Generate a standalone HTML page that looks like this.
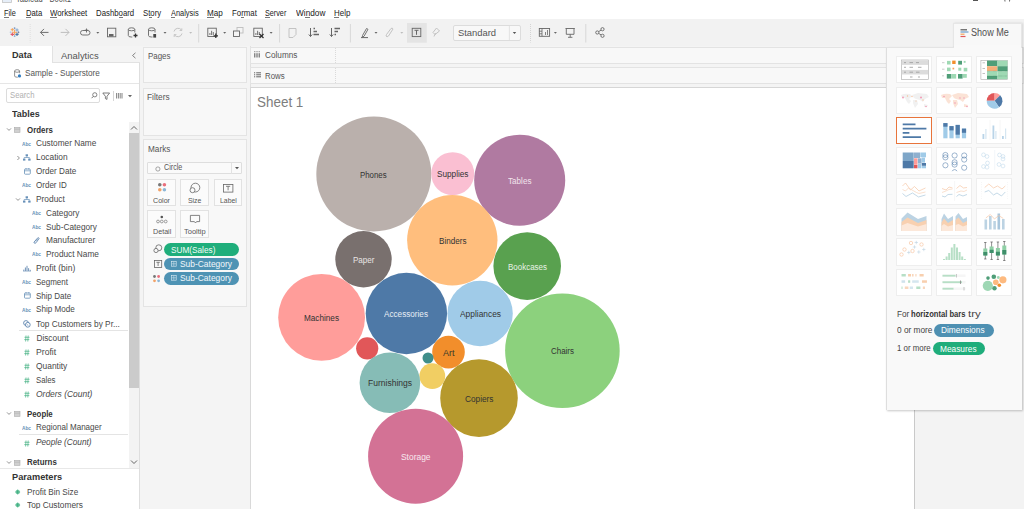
<!DOCTYPE html>
<html><head><meta charset="utf-8"><style>
*{margin:0;padding:0;box-sizing:border-box}
html,body{width:1024px;height:509px;overflow:hidden;background:#fff;font-family:"Liberation Sans",sans-serif;color:#333;position:relative}
.a{position:absolute}
.t{position:absolute;white-space:nowrap;line-height:1}
svg{overflow:visible}
</style></head><body>
<div class="a" style="left:0px;top:0px;width:1024px;height:19px;background:#fff"></div>
<svg class="a" style="left:1.6px;top:0px;" width="10" height="3" viewBox="0 0 10 3"><rect x="0.5" y="-4" width="9" height="6.5" fill="#e6eef8" stroke="#c4c4c4" stroke-width="0.8"/></svg>
<div class="t" style="left:15.6px;top:-6.26px;font-size:10px;color:#555;transform:scaleX(0.761);transform-origin:0 0;">Tableau - Book1</div>
<div class="a" style="left:973px;top:0px;width:5px;height:1.3px;background:#555"></div>
<svg class="a" style="left:1004px;top:0px;" width="7" height="2" viewBox="0 0 7 2"><path d="M0.5 -3 L1 1.5 M6 -3 L5.5 1.5" stroke="#666" stroke-width="1"/></svg>
<div class="t" style="left:4.4px;top:8.82px;font-size:8.6px;color:#222;transform:scaleX(0.851);transform-origin:0 0;">File</div>
<div class="a" style="left:4.4px;top:16.6px;width:4.5px;height:0.7px;background:#777"></div>
<div class="t" style="left:25.5px;top:8.82px;font-size:8.6px;color:#222;transform:scaleX(0.897);transform-origin:0 0;">Data</div>
<div class="a" style="left:25.5px;top:16.6px;width:5.6px;height:0.7px;background:#777"></div>
<div class="t" style="left:50.1px;top:8.82px;font-size:8.6px;color:#222;transform:scaleX(0.911);transform-origin:0 0;">Worksheet</div>
<div class="a" style="left:50.1px;top:16.6px;width:7.4px;height:0.7px;background:#777"></div>
<div class="t" style="left:96.3px;top:8.82px;font-size:8.6px;color:#222;transform:scaleX(0.908);transform-origin:0 0;">Dashboard</div>
<div class="a" style="left:118.9px;top:16.6px;width:4.3px;height:0.7px;background:#777"></div>
<div class="t" style="left:143.3px;top:8.82px;font-size:8.6px;color:#222;transform:scaleX(0.902);transform-origin:0 0;">Story</div>
<div class="a" style="left:148.5px;top:16.6px;width:3px;height:0.7px;background:#777"></div>
<div class="t" style="left:170.6px;top:8.82px;font-size:8.6px;color:#222;transform:scaleX(0.862);transform-origin:0 0;">Analysis</div>
<div class="a" style="left:170.6px;top:16.6px;width:4.9px;height:0.7px;background:#777"></div>
<div class="t" style="left:207.1px;top:8.82px;font-size:8.6px;color:#222;transform:scaleX(0.944);transform-origin:0 0;">Map</div>
<div class="a" style="left:207.1px;top:16.6px;width:6.8px;height:0.7px;background:#777"></div>
<div class="t" style="left:231.8px;top:8.82px;font-size:8.6px;color:#222;transform:scaleX(0.914);transform-origin:0 0;">Format</div>
<div class="a" style="left:241.0px;top:16.6px;width:3px;height:0.7px;background:#777"></div>
<div class="t" style="left:265.2px;top:8.82px;font-size:8.6px;color:#222;transform:scaleX(0.841);transform-origin:0 0;">Server</div>
<div class="a" style="left:265.2px;top:16.6px;width:4.8px;height:0.7px;background:#777"></div>
<div class="t" style="left:295.6px;top:8.82px;font-size:8.6px;color:#222;transform:scaleX(0.961);transform-origin:0 0;">Window</div>
<div class="a" style="left:305.2px;top:16.6px;width:4.6px;height:0.7px;background:#777"></div>
<div class="t" style="left:333.7px;top:8.82px;font-size:8.6px;color:#222;transform:scaleX(0.922);transform-origin:0 0;">Help</div>
<div class="a" style="left:333.7px;top:16.6px;width:5.7px;height:0.7px;background:#777"></div>
<div class="a" style="left:0px;top:19px;width:1024px;height:27px;background:#f2f2f2"></div>
<svg class="a" style="left:0px;top:19px;" width="620" height="27" viewBox="0 0 620 27"><path d="M12.1 13.3H17.1M14.6 10.8V15.8" stroke="#f5a35a" stroke-width="1.0"/><path d="M10.700000000000001 10.7H13.9M12.3 9.1V12.299999999999999" stroke="#f5a35a" stroke-width="1.0"/><path d="M15.4 11H18.6M17 9.4V12.6" stroke="#7fa7d0" stroke-width="1.0"/><path d="M10.600000000000001 15.4H14.0M12.3 13.700000000000001V17.1" stroke="#e05a6d" stroke-width="1.1"/><path d="M15.4 15.4H18.6M17 13.8V17.0" stroke="#4e79a7" stroke-width="1.1"/><path d="M13.7 9.2H15.5M14.6 8.299999999999999V10.1" stroke="#6d8fc0" stroke-width="0.8"/><path d="M13.7 17.1H15.5M14.6 16.200000000000003V18.0" stroke="#7fa7d0" stroke-width="0.8"/><path d="M9.7 13.3H11.5M10.6 12.4V14.200000000000001" stroke="#a9c4e0" stroke-width="0.8"/><path d="M17.6 13.3H19.4M18.5 12.4V14.200000000000001" stroke="#6f7fa0" stroke-width="0.8"/><path d="M30.2 5V23.5" stroke="#dcdcdc" stroke-width="0.8" stroke-dasharray="1 1"/><path d="M40.5 13.4H48.5M44 9.9L40.5 13.4L44 16.9" stroke="#666666" stroke-width="0.95" fill="none"/><path d="M60.7 13.4H69M65.5 9.9L69 13.4L65.5 16.9" stroke="#bdbdbd" stroke-width="1" fill="none"/><rect x="80.5" y="11.5" width="9.5" height="4.5" rx="2.2" stroke="#666666" stroke-width="0.9" fill="none"/><path d="M86.5 9.5V13.5M84.8 11.2H88.2" stroke="#666666" stroke-width="0.9"/><path d="M96.3 13.1h3l-1.5 1.6z" fill="#666666"/><rect x="107.5" y="9.2" width="8.3" height="8.6" stroke="#666666" stroke-width="0.9" fill="none"/><rect x="109" y="15" width="4.5" height="2.5" fill="#666666"/><path d="M128.3 10.5V16.5Q128.3 18 131.3 18H132.3M134.8 10.5V13.5" stroke="#666666" stroke-width="0.9" fill="none"/><ellipse cx="131.55" cy="10.3" rx="3.25" ry="1.5" stroke="#666666" stroke-width="0.9" fill="none"/><path d="M133.5 16.5H137.5M135.5 14.5V18.5" stroke="#333" stroke-width="1.3"/><path d="M148.5 10.5V16.5Q148.5 18 151.5 18H152.5M155.0 10.5V13.5" stroke="#666666" stroke-width="0.9" fill="none"/><ellipse cx="151.75" cy="10.3" rx="3.25" ry="1.5" stroke="#666666" stroke-width="0.9" fill="none"/><rect x="153.3" y="15" width="2.8" height="3.6" fill="#444"/><path d="M163.5 13.1h3l-1.5 1.6z" fill="#666666"/><path d="M174 12.5A4.2 4.2 0 0 1 181.5 11M182 14.5A4.2 4.2 0 0 1 174.5 16" stroke="#bdbdbd" stroke-width="0.9" fill="none"/><path d="M181.8 9.3V11.5H179.6M174.2 18V15.6H176.4" stroke="#bdbdbd" stroke-width="0.8" fill="none"/><path d="M189.2 13.1h3l-1.5 1.6z" fill="#bdbdbd"/><path d="M198.7 5V23.5" stroke="#d8d8d8" stroke-width="1"/><rect x="207.8" y="9.2" width="8.5" height="8.3" stroke="#666666" stroke-width="0.9" fill="none"/><path d="M209.9 16V14M211.60000000000002 16V11.8M213.3 16V13" stroke="#666666" stroke-width="0.9"/><path d="M213.5 16.8H218M215.8 14.5V19" stroke="#333" stroke-width="1.3"/><path d="M223.2 13.1h3l-1.5 1.6z" fill="#666666"/><rect x="237" y="8.5" width="6" height="5.5" stroke="#bdbdbd" stroke-width="0.9" fill="#f4f4f4"/><rect x="233.5" y="12" width="6" height="5.5" stroke="#666666" stroke-width="0.9" fill="#f4f4f4"/><rect x="253.8" y="9.2" width="8.5" height="8.3" stroke="#666666" stroke-width="0.9" fill="none"/><path d="M255.9 16V14M257.6 16V11.8M259.3 16V13" stroke="#666666" stroke-width="0.9"/><path d="M259.5 15L263.5 19M263.5 15L259.5 19" stroke="#333" stroke-width="1.3"/><path d="M269.6 13.1h3l-1.5 1.6z" fill="#666666"/><path d="M279.6 5V23.5" stroke="#d8d8d8" stroke-width="1"/><path d="M289 9.5H296V15.5L293 18.5H289Z" stroke="#bdbdbd" stroke-width="0.9" fill="none"/><path d="M310.5 9V17.5M308.8 15.5L310.5 17.5L312.2 15.5" stroke="#666666" stroke-width="1" fill="none"/><path d="M313.5 9.5H315M313.5 12.5H317M313.5 15.5H319" stroke="#666666" stroke-width="1.6"/><path d="M331.5 9V17.5M329.8 15.5L331.5 17.5L333.2 15.5" stroke="#666666" stroke-width="1" fill="none"/><path d="M334.5 9.5H340M334.5 12.5H338M334.5 15.5H336" stroke="#666666" stroke-width="1.6"/><path d="M350.4 5V23.5" stroke="#d8d8d8" stroke-width="1"/><path d="M362.5 16.5L366.5 9.5L368 10.3L364 17.3L362.3 18Z" stroke="#666666" stroke-width="0.9" fill="none"/><path d="M361 18.6H368" stroke="#666666" stroke-width="1"/><path d="M374.5 13.1h3l-1.5 1.6z" fill="#666666"/><path d="M386.5 15.5L391 9.5Q392.5 8.5 393 10L388.5 17Q387 18.5 386 17Z" stroke="#bdbdbd" stroke-width="0.9" fill="none"/><path d="M400.3 13.1h3l-1.5 1.6z" fill="#bdbdbd"/><rect x="407" y="4" width="19.8" height="19.7" fill="#e4e4e4"/><rect x="412.2" y="9.3" width="8.6" height="8.3" stroke="#666666" stroke-width="0.9" fill="none"/><path d="M414.5 11.3H418.5M416.5 11.3V15.8" stroke="#666666" stroke-width="1"/><path d="M434 17.5L435.5 14M433 13.5L436.5 9L439.5 12L435 15.5Z" stroke="#bdbdbd" stroke-width="0.9" fill="none"/><rect x="453.5" y="6.5" width="67" height="15" rx="1.5" fill="#f8f8f8" stroke="#dcdcdc" stroke-width="1"/><path d="M509.4 7V21" stroke="#e2e2e2"/><path d="M512.8 13h3.4l-1.7 1.9z" fill="#555"/><path d="M530.5 5V23.5" stroke="#d4d4d4" stroke-width="1" stroke-dasharray="1 1"/><rect x="539.3" y="9.5" width="10.3" height="7.8" stroke="#666666" stroke-width="0.9" fill="none"/><path d="M542 9.5V17.3M539.3 12.2H542M539.3 14.8H542M545.5 16V13M547.5 16V11" stroke="#666666" stroke-width="0.8"/><path d="M553.9 13.1h3l-1.5 1.6z" fill="#666666"/><path d="M565.5 9.5H574.8M566.3 9.5V15.3H574V9.5M570.2 15.3V18.2M568 18.3H572.4" stroke="#666666" stroke-width="0.9" fill="none"/><path d="M585.8 5V23.5" stroke="#d8d8d8" stroke-width="1"/><circle cx="597.3" cy="13.5" r="1.6" stroke="#666666" stroke-width="0.9" fill="none"/><circle cx="602.5" cy="10.2" r="1.6" stroke="#666666" stroke-width="0.9" fill="none"/><circle cx="602.5" cy="16.8" r="1.6" stroke="#666666" stroke-width="0.9" fill="none"/><path d="M598.7 12.6L601.1 11.1M598.7 14.4L601.1 15.9" stroke="#666666" stroke-width="0.9"/></svg>
<div class="t" style="left:458.0px;top:28.46px;font-size:9.5px;color:#555;transform:scaleX(0.988);transform-origin:0 0;">Standard</div>
<div class="a" style="left:0px;top:46px;width:140px;height:463px;background:#fff"></div>
<div class="a" style="left:139px;top:46px;width:1px;height:463px;background:#dedede"></div>
<div class="a" style="left:51.6px;top:46px;width:88px;height:17.4px;background:#f4f4f4;border-left:1px solid #e2e2e2;border-bottom:1px solid #e2e2e2"></div>
<div class="t" style="left:12.1px;top:50.37px;font-size:9.6px;color:#333;font-weight:bold;transform:scaleX(0.952);transform-origin:0 0;">Data</div>
<div class="t" style="left:60.5px;top:50.56px;font-size:9.5px;color:#555;transform:scaleX(0.994);transform-origin:0 0;">Analytics</div>
<svg class="a" style="left:131px;top:52px;" width="6" height="6" viewBox="0 0 6 6"><path d="M4.5 0.8L1.5 3.5L4.5 6.2" stroke="#777" stroke-width="0.9" fill="none"/></svg>
<svg class="a" style="left:14px;top:69px;" width="8" height="9" viewBox="0 0 8 9"><path d="M0.6 2V7Q0.6 8.2 3 8.2H3.8M5.6 2V4.2" stroke="#777" stroke-width="0.8" fill="none"/><ellipse cx="3.1" cy="2" rx="2.5" ry="1.3" stroke="#777" stroke-width="0.8" fill="none"/><circle cx="5.5" cy="6.9" r="1.6" fill="#2f7bbf"/></svg>
<div class="t" style="left:24.8px;top:69.12px;font-size:8.6px;color:#555;transform:scaleX(0.950);transform-origin:0 0;">Sample - Superstore</div>
<div class="a" style="left:0px;top:83px;width:139px;height:1px;background:#e6e6e6"></div>
<div class="a" style="left:5.5px;top:88.4px;width:94.5px;height:15px;background:#fff;border:1px solid #dcdcdc;border-radius:2px"></div>
<div class="t" style="left:9.9px;top:91.39px;font-size:8.4px;color:#b0b0b0;transform:scaleX(0.920);transform-origin:0 0;">Search</div>
<svg class="a" style="left:91px;top:92px;" width="7" height="7" viewBox="0 0 7 7"><circle cx="3.8" cy="2.8" r="2.1" stroke="#666" stroke-width="0.8" fill="none"/><path d="M2.3 4.4L0.6 6.2" stroke="#666" stroke-width="0.9"/></svg>
<svg class="a" style="left:102px;top:92px;" width="9" height="8" viewBox="0 0 9 8"><path d="M0.8 1H7.6L5 4.3V7.4L3.4 6.6V4.3Z" stroke="#666" stroke-width="0.85" fill="none"/></svg>
<div class="a" style="left:112.5px;top:91px;width:0.8px;height:10px;background:#d6d6d6"></div>
<svg class="a" style="left:116px;top:93px;" width="7" height="6" viewBox="0 0 7 6"><path d="M0.6 0V5.5M2.4 0V5.5M4.2 0V5.5M6 0V5.5" stroke="#777" stroke-width="0.9"/></svg>
<svg class="a" style="left:127.5px;top:94.5px;" width="5" height="3" viewBox="0 0 5 3"><path d="M0 0h4l-2 2.3z" fill="#666"/></svg>
<div class="t" style="left:12.4px;top:109.10px;font-size:9.8px;color:#333;font-weight:bold;transform:scaleX(0.917);transform-origin:0 0;">Tables</div>
<div class="a" style="left:128.6px;top:122.2px;width:10.4px;height:346px;background:#f3f3f3"></div>
<div class="a" style="left:128.6px;top:133.2px;width:10.4px;height:254.5px;background:#cbcbcb"></div>
<svg class="a" style="left:130px;top:125px;" width="8" height="6" viewBox="0 0 8 6"><path d="M1 4.5L4 1.5L7 4.5" stroke="#555" stroke-width="0.9" fill="none"/></svg>
<svg class="a" style="left:130px;top:459px;" width="8" height="6" viewBox="0 0 8 6"><path d="M1 1.5L4 4.5L7 1.5" stroke="#555" stroke-width="0.9" fill="none"/></svg>
<svg class="a" style="left:5.8px;top:126.5px;" width="6" height="5" viewBox="0 0 6 5"><path d="M1 1.4L3 3.4L5 1.4" stroke="#777" stroke-width="0.8" fill="none"/></svg>
<svg class="a" style="left:14px;top:126.5px;" width="7" height="6" viewBox="0 0 7 6"><rect x="0.5" y="0.5" width="5.5" height="4.8" fill="#d0d0d0" stroke="#aaa" stroke-width="0.6"/><path d="M0.5 2.2H6" stroke="#aaa" stroke-width="0.5"/></svg>
<div class="t" style="left:26.8px;top:124.64px;font-size:9.4px;color:#333;font-weight:bold;transform:scaleX(0.840);transform-origin:0 0;">Orders</div>
<div class="t" style="left:36.4px;top:139.27px;font-size:8.3px;color:#484848;transform:scaleX(0.998);transform-origin:0 0;">Customer Name</div>
<div class="t" style="left:22.0px;top:140.62px;font-size:6px;color:#6790b8;font-weight:bold;transform:scaleX(0.794);transform-origin:0 0;">Abc</div>
<div class="t" style="left:36.4px;top:152.97px;font-size:8.3px;color:#484848;transform:scaleX(1.010);transform-origin:0 0;">Location</div>
<svg class="a" style="left:23px;top:153.8px;" width="8" height="7" viewBox="0 0 8 7"><rect x="2.6" y="0.3" width="2.4" height="2" fill="#6790b8"/><path d="M3.8 2.3V3.5M1.2 3.5H6.4M1.2 3.5V4.5M6.4 3.5V4.5" stroke="#6790b8" stroke-width="0.7" fill="none"/><rect x="0" y="4.6" width="2.4" height="2" fill="#6790b8"/><rect x="5.2" y="4.6" width="2.4" height="2" fill="#6790b8"/></svg>
<div class="t" style="left:36.4px;top:166.77px;font-size:8.3px;color:#484848;transform:scaleX(0.979);transform-origin:0 0;">Order Date</div>
<svg class="a" style="left:23.5px;top:167.5px;" width="7" height="7" viewBox="0 0 7 7"><rect x="0.5" y="1" width="5.8" height="5.2" rx="0.8" stroke="#6790b8" stroke-width="0.8" fill="none"/><path d="M0.5 2.8H6.3M2 0V1.5M4.8 0V1.5" stroke="#6790b8" stroke-width="0.7"/></svg>
<div class="t" style="left:36.4px;top:180.97px;font-size:8.3px;color:#484848;transform:scaleX(0.968);transform-origin:0 0;">Order ID</div>
<div class="t" style="left:22.0px;top:182.32px;font-size:6px;color:#6790b8;font-weight:bold;transform:scaleX(0.794);transform-origin:0 0;">Abc</div>
<div class="t" style="left:36.4px;top:194.77px;font-size:8.3px;color:#484848;transform:scaleX(1.007);transform-origin:0 0;">Product</div>
<svg class="a" style="left:23px;top:195.60000000000002px;" width="8" height="7" viewBox="0 0 8 7"><rect x="2.6" y="0.3" width="2.4" height="2" fill="#6790b8"/><path d="M3.8 2.3V3.5M1.2 3.5H6.4M1.2 3.5V4.5M6.4 3.5V4.5" stroke="#6790b8" stroke-width="0.7" fill="none"/><rect x="0" y="4.6" width="2.4" height="2" fill="#6790b8"/><rect x="5.2" y="4.6" width="2.4" height="2" fill="#6790b8"/></svg>
<div class="t" style="left:46.1px;top:208.77px;font-size:8.3px;color:#484848;transform:scaleX(0.992);transform-origin:0 0;">Category</div>
<div class="t" style="left:32.0px;top:210.12px;font-size:6px;color:#6790b8;font-weight:bold;transform:scaleX(0.794);transform-origin:0 0;">Abc</div>
<div class="t" style="left:46.1px;top:222.77px;font-size:8.3px;color:#484848;transform:scaleX(0.996);transform-origin:0 0;">Sub-Category</div>
<div class="t" style="left:32.0px;top:224.12px;font-size:6px;color:#6790b8;font-weight:bold;transform:scaleX(0.794);transform-origin:0 0;">Abc</div>
<div class="t" style="left:46.1px;top:236.37px;font-size:8.3px;color:#484848;transform:scaleX(1.006);transform-origin:0 0;">Manufacturer</div>
<svg class="a" style="left:33px;top:236.9px;" width="7" height="7" viewBox="0 0 7 7"><path d="M1 5.2L4.4 1.2Q5.6 0.2 6.2 1.3L3.2 5.6Q2 6.8 1.2 6Z" stroke="#4e79a7" stroke-width="0.8" fill="none"/><path d="M2.5 4.2L4.8 1.8" stroke="#4e79a7" stroke-width="0.6"/></svg>
<div class="t" style="left:46.1px;top:250.07px;font-size:8.3px;color:#484848;transform:scaleX(0.999);transform-origin:0 0;">Product Name</div>
<div class="t" style="left:32.0px;top:251.42px;font-size:6px;color:#6790b8;font-weight:bold;transform:scaleX(0.794);transform-origin:0 0;">Abc</div>
<div class="t" style="left:36.4px;top:264.07px;font-size:8.3px;color:#484848;transform:scaleX(1.027);transform-origin:0 0;">Profit (bin)</div>
<svg class="a" style="left:22.5px;top:265.1px;" width="9" height="7" viewBox="0 0 9 7"><path d="M0.8 6V4.6M2.4 6V2.5M4 6V0.8M5.6 6V3.2M7.2 6V4.8" stroke="#4e79a7" stroke-width="0.8"/><path d="M0 6.3H8" stroke="#4e79a7" stroke-width="0.4"/></svg>
<div class="t" style="left:36.4px;top:277.87px;font-size:8.3px;color:#484848;transform:scaleX(0.963);transform-origin:0 0;">Segment</div>
<div class="t" style="left:22.0px;top:279.22px;font-size:6px;color:#6790b8;font-weight:bold;transform:scaleX(0.794);transform-origin:0 0;">Abc</div>
<div class="t" style="left:36.4px;top:291.57px;font-size:8.3px;color:#484848;transform:scaleX(0.966);transform-origin:0 0;">Ship Date</div>
<svg class="a" style="left:23.5px;top:292.3px;" width="7" height="7" viewBox="0 0 7 7"><rect x="0.5" y="1" width="5.8" height="5.2" rx="0.8" stroke="#6790b8" stroke-width="0.8" fill="none"/><path d="M0.5 2.8H6.3M2 0V1.5M4.8 0V1.5" stroke="#6790b8" stroke-width="0.7"/></svg>
<div class="t" style="left:36.4px;top:305.37px;font-size:8.3px;color:#484848;transform:scaleX(0.978);transform-origin:0 0;">Ship Mode</div>
<div class="t" style="left:22.0px;top:306.72px;font-size:6px;color:#6790b8;font-weight:bold;transform:scaleX(0.794);transform-origin:0 0;">Abc</div>
<div class="t" style="left:36.4px;top:319.67px;font-size:8.3px;color:#484848;transform:scaleX(0.999);transform-origin:0 0;">Top Customers by Pr...</div>
<svg class="a" style="left:22.5px;top:319.9px;" width="8" height="8" viewBox="0 0 8 8"><circle cx="3" cy="3" r="2.4" stroke="#4e79a7" stroke-width="0.8" fill="none"/><circle cx="4.8" cy="4.8" r="2.4" stroke="#4e79a7" stroke-width="0.8" fill="#fff"/><path d="M3.6 4.2L5.4 5.6" stroke="#4e79a7" stroke-width="0.6"/></svg>
<div class="t" style="left:36.4px;top:334.37px;font-size:8.3px;color:#484848;transform:scaleX(1.000);transform-origin:0 0;">Discount</div>
<svg class="a" style="left:24px;top:335.4px;" width="6" height="7" viewBox="0 0 6 7"><path d="M2 0.5L1.6 6.5M4.2 0.5L3.8 6.5M0.5 2.3H5.5M0.3 4.6H5.3" stroke="#4fb58a" stroke-width="0.75"/></svg>
<div class="t" style="left:36.4px;top:348.17px;font-size:8.3px;color:#484848;transform:scaleX(1.043);transform-origin:0 0;">Profit</div>
<svg class="a" style="left:24px;top:349.2px;" width="6" height="7" viewBox="0 0 6 7"><path d="M2 0.5L1.6 6.5M4.2 0.5L3.8 6.5M0.5 2.3H5.5M0.3 4.6H5.3" stroke="#4fb58a" stroke-width="0.75"/></svg>
<div class="t" style="left:36.4px;top:361.87px;font-size:8.3px;color:#484848;transform:scaleX(1.013);transform-origin:0 0;">Quantity</div>
<svg class="a" style="left:24px;top:362.9px;" width="6" height="7" viewBox="0 0 6 7"><path d="M2 0.5L1.6 6.5M4.2 0.5L3.8 6.5M0.5 2.3H5.5M0.3 4.6H5.3" stroke="#4fb58a" stroke-width="0.75"/></svg>
<div class="t" style="left:36.4px;top:375.67px;font-size:8.3px;color:#484848;transform:scaleX(0.939);transform-origin:0 0;">Sales</div>
<svg class="a" style="left:24px;top:376.7px;" width="6" height="7" viewBox="0 0 6 7"><path d="M2 0.5L1.6 6.5M4.2 0.5L3.8 6.5M0.5 2.3H5.5M0.3 4.6H5.3" stroke="#4fb58a" stroke-width="0.75"/></svg>
<div class="a" style="left:19.3px;top:330px;width:108.7px;height:0.8px;background:#e4e4e4"></div>
<div class="t" style="left:36.4px;top:389.67px;font-size:8.3px;color:#484848;font-style:italic;transform:scaleX(1.019);transform-origin:0 0;">Orders (Count)</div>
<svg class="a" style="left:24px;top:390.7px;" width="6" height="7" viewBox="0 0 6 7"><path d="M2 0.5L1.6 6.5M4.2 0.5L3.8 6.5M0.5 2.3H5.5M0.3 4.6H5.3" stroke="#4fb58a" stroke-width="0.75"/></svg>
<svg class="a" style="left:5.8px;top:410.5px;" width="6" height="5" viewBox="0 0 6 5"><path d="M1 1.4L3 3.4L5 1.4" stroke="#777" stroke-width="0.8" fill="none"/></svg>
<svg class="a" style="left:14px;top:410.5px;" width="7" height="6" viewBox="0 0 7 6"><rect x="0.5" y="0.5" width="5.5" height="4.8" fill="#d0d0d0" stroke="#aaa" stroke-width="0.6"/><path d="M0.5 2.2H6" stroke="#aaa" stroke-width="0.5"/></svg>
<div class="t" style="left:26.8px;top:408.74px;font-size:9.4px;color:#333;font-weight:bold;transform:scaleX(0.837);transform-origin:0 0;">People</div>
<div class="t" style="left:36.4px;top:423.37px;font-size:8.3px;color:#484848;transform:scaleX(0.969);transform-origin:0 0;">Regional Manager</div>
<div class="t" style="left:22.0px;top:424.72px;font-size:6px;color:#6790b8;font-weight:bold;transform:scaleX(0.794);transform-origin:0 0;">Abc</div>
<div class="a" style="left:19.3px;top:433.5px;width:108.7px;height:0.8px;background:#e4e4e4"></div>
<div class="t" style="left:36.4px;top:438.47px;font-size:8.3px;color:#484848;font-style:italic;transform:scaleX(0.996);transform-origin:0 0;">People (Count)</div>
<svg class="a" style="left:24px;top:439.5px;" width="6" height="7" viewBox="0 0 6 7"><path d="M2 0.5L1.6 6.5M4.2 0.5L3.8 6.5M0.5 2.3H5.5M0.3 4.6H5.3" stroke="#4fb58a" stroke-width="0.75"/></svg>
<svg class="a" style="left:5.8px;top:459.5px;" width="6" height="5" viewBox="0 0 6 5"><path d="M1 1.4L3 3.4L5 1.4" stroke="#777" stroke-width="0.8" fill="none"/></svg>
<svg class="a" style="left:14px;top:459.5px;" width="7" height="6" viewBox="0 0 7 6"><rect x="0.5" y="0.5" width="5.5" height="4.8" fill="#d0d0d0" stroke="#aaa" stroke-width="0.6"/><path d="M0.5 2.2H6" stroke="#aaa" stroke-width="0.5"/></svg>
<div class="t" style="left:26.8px;top:457.44px;font-size:9.4px;color:#333;font-weight:bold;transform:scaleX(0.842);transform-origin:0 0;">Returns</div>
<div class="a" style="left:0px;top:468px;width:139px;height:1px;background:#e8e8e8"></div>
<div class="t" style="left:12.0px;top:472.00px;font-size:9.8px;color:#333;font-weight:bold;transform:scaleX(0.940);transform-origin:0 0;">Parameters</div>
<svg class="a" style="left:14.8px;top:488.90000000000003px;" width="6" height="6" viewBox="0 0 6 6"><circle cx="2.7" cy="3" r="2.2" fill="#7fcfa9"/><path d="M0.3 3H5.1M2.7 0.6V5.4" stroke="#2ea37a" stroke-width="0.7"/></svg>
<div class="t" style="left:26.9px;top:488.07px;font-size:8.3px;color:#484848;transform:scaleX(0.982);transform-origin:0 0;">Profit Bin Size</div>
<svg class="a" style="left:14.8px;top:502.2px;" width="6" height="6" viewBox="0 0 6 6"><circle cx="2.7" cy="3" r="2.2" fill="#7fcfa9"/><path d="M0.3 3H5.1M2.7 0.6V5.4" stroke="#2ea37a" stroke-width="0.7"/></svg>
<div class="t" style="left:26.9px;top:501.37px;font-size:8.3px;color:#484848;transform:scaleX(1.003);transform-origin:0 0;">Top Customers</div>
<svg class="a" style="left:15.5px;top:154.5px;" width="5" height="6" viewBox="0 0 5 6"><path d="M1.4 1L3.4 3L1.4 5" stroke="#777" stroke-width="0.8" fill="none"/></svg>
<svg class="a" style="left:14.8px;top:197px;" width="6" height="5" viewBox="0 0 6 5"><path d="M1 1.4L3 3.4L5 1.4" stroke="#777" stroke-width="0.8" fill="none"/></svg>
<div class="a" style="left:140px;top:46px;width:109.5px;height:463px;background:#f4f4f4"></div>
<div class="a" style="left:249.5px;top:46px;width:1px;height:463px;background:#e0e0e0"></div>
<div class="a" style="left:143.3px;top:46.7px;width:103.3px;height:36.8px;background:#f8f8f8;border:1px solid #e4e4e4"></div>
<div class="t" style="left:147.6px;top:52.15px;font-size:8.8px;color:#555;transform:scaleX(0.902);transform-origin:0 0;">Pages</div>
<div class="a" style="left:143.3px;top:87.5px;width:103.3px;height:48.1px;background:#f8f8f8;border:1px solid #e4e4e4"></div>
<div class="t" style="left:147.4px;top:93.25px;font-size:8.8px;color:#555;transform:scaleX(0.943);transform-origin:0 0;">Filters</div>
<div class="a" style="left:143.3px;top:139.3px;width:103.3px;height:167.7px;background:#f8f8f8;border:1px solid #e4e4e4"></div>
<div class="t" style="left:147.5px;top:145.45px;font-size:8.8px;color:#555;transform:scaleX(0.935);transform-origin:0 0;">Marks</div>
<div class="a" style="left:147.4px;top:162.4px;width:94.6px;height:12.1px;background:#fafafa;border:1px solid #dedede;border-radius:1px"></div>
<div class="a" style="left:230.5px;top:163px;width:0.8px;height:11px;background:#e2e2e2"></div>
<svg class="a" style="left:234.5px;top:167px;" width="5" height="3" viewBox="0 0 5 3"><path d="M0 0h4l-2 2.3z" fill="#555"/></svg>
<svg class="a" style="left:154.5px;top:165.6px;" width="6" height="6" viewBox="0 0 6 6"><circle cx="2.9" cy="3" r="2.1" stroke="#888" stroke-width="0.75" fill="none"/></svg>
<div class="t" style="left:163.8px;top:164.36px;font-size:8.2px;color:#555;transform:scaleX(0.873);transform-origin:0 0;">Circle</div>
<div class="a" style="left:147.1px;top:178.9px;width:28.6px;height:27.3px;background:#fbfbfb;border:1px solid #e2e2e2"></div>
<div class="a" style="left:180px;top:178.9px;width:29.4px;height:27.3px;background:#fbfbfb;border:1px solid #e2e2e2"></div>
<div class="a" style="left:213.5px;top:178.9px;width:28.5px;height:27.3px;background:#fbfbfb;border:1px solid #e2e2e2"></div>
<div class="a" style="left:147.1px;top:210.3px;width:28.6px;height:27.3px;background:#fbfbfb;border:1px solid #e2e2e2"></div>
<div class="a" style="left:180px;top:210.3px;width:29.4px;height:27.3px;background:#fbfbfb;border:1px solid #e2e2e2"></div>
<div class="t" style="left:152.9px;top:196.50px;font-size:7.8px;color:#555;transform:scaleX(0.912);transform-origin:0 0;">Color</div>
<div class="t" style="left:187.8px;top:196.50px;font-size:7.8px;color:#555;transform:scaleX(0.883);transform-origin:0 0;">Size</div>
<div class="t" style="left:219.5px;top:196.50px;font-size:7.8px;color:#555;transform:scaleX(0.880);transform-origin:0 0;">Label</div>
<div class="t" style="left:152.9px;top:228.20px;font-size:7.8px;color:#555;transform:scaleX(0.918);transform-origin:0 0;">Detail</div>
<div class="t" style="left:184.0px;top:228.20px;font-size:7.8px;color:#555;transform:scaleX(0.962);transform-origin:0 0;">Tooltip</div>
<svg class="a" style="left:157.5px;top:183.2px;" width="8" height="8" viewBox="0 0 8 8"><circle cx="1.8" cy="1.8" r="1.8" fill="#777"/><circle cx="6.3999999999999995" cy="1.8" r="1.8" fill="#ea6f7c"/><circle cx="1.8" cy="6.8" r="1.8" fill="#f2a268"/><circle cx="6.3999999999999995" cy="6.8" r="1.8" fill="#8cb6d6"/></svg>
<svg class="a" style="left:189px;top:181.5px;" width="12" height="10" viewBox="0 0 12 10"><circle cx="6.4" cy="5.6" r="4.4" stroke="#666" stroke-width="0.8" fill="none"/><circle cx="3.5" cy="8.2" r="2.5" stroke="#666" stroke-width="0.8" fill="#fbfbfb"/></svg>
<svg class="a" style="left:223px;top:183.5px;" width="10" height="9" viewBox="0 0 10 9"><rect x="0.4" y="0.4" width="9.5" height="7.7" stroke="#666" stroke-width="0.8" fill="none"/><path d="M3 2.3H7.2M5.1 2.3V6.3" stroke="#666" stroke-width="0.8"/></svg>
<svg class="a" style="left:155.5px;top:214.5px;" width="12" height="8" viewBox="0 0 12 8"><circle cx="5.8" cy="2" r="1.3" fill="#555"/><circle cx="2" cy="6.5" r="1.4" stroke="#777" stroke-width="0.7" fill="none"/><circle cx="5.8" cy="6.5" r="1.4" stroke="#777" stroke-width="0.7" fill="none"/><circle cx="9.7" cy="6.5" r="1.4" stroke="#777" stroke-width="0.7" fill="none"/></svg>
<svg class="a" style="left:190px;top:215px;" width="11" height="9" viewBox="0 0 11 9"><path d="M0.4 0.4H9.6V6.6H6.6L5.5 8L4.4 6.6H0.4Z" stroke="#666" stroke-width="0.8" fill="none"/></svg>
<div class="a" style="left:163.9px;top:243.1px;width:75.6px;height:12.8px;background:#1fae7b;border-radius:7px"></div>
<div class="t" style="left:171.0px;top:245.99px;font-size:8.4px;color:#f4fbf7;transform:scaleX(0.983);transform-origin:0 0;">SUM(Sales)</div>
<div class="a" style="left:163.9px;top:257.9px;width:75.6px;height:12.4px;background:#4e93b4;border-radius:7px"></div>
<div class="a" style="left:163.9px;top:272.2px;width:75.6px;height:12.6px;background:#4e93b4;border-radius:7px"></div>
<svg class="a" style="left:171px;top:261.1px;" width="6" height="6" viewBox="0 0 6 6"><rect x="0.4" y="0.4" width="4.8" height="4.8" stroke="#e0eef5" stroke-width="0.6" fill="none"/><path d="M2.8 0.6V5M0.6 2.8H5" stroke="#e0eef5" stroke-width="0.5"/></svg>
<div class="t" style="left:180.2px;top:259.99px;font-size:8.4px;color:#f2f8fb;transform:scaleX(1.005);transform-origin:0 0;">Sub-Category</div>
<svg class="a" style="left:171px;top:275.4px;" width="6" height="6" viewBox="0 0 6 6"><rect x="0.4" y="0.4" width="4.8" height="4.8" stroke="#e0eef5" stroke-width="0.6" fill="none"/><path d="M2.8 0.6V5M0.6 2.8H5" stroke="#e0eef5" stroke-width="0.5"/></svg>
<div class="t" style="left:180.2px;top:274.29px;font-size:8.4px;color:#f2f8fb;transform:scaleX(1.005);transform-origin:0 0;">Sub-Category</div>
<svg class="a" style="left:153px;top:244px;" width="10" height="10" viewBox="0 0 10 10"><circle cx="5.8" cy="3.8" r="3" stroke="#666" stroke-width="0.8" fill="none"/><circle cx="3" cy="6.5" r="2.1" stroke="#666" stroke-width="0.8" fill="#f8f8f8"/></svg>
<svg class="a" style="left:153.5px;top:260px;" width="9" height="9" viewBox="0 0 9 9"><rect x="0.5" y="0.5" width="7.2" height="7" stroke="#666" stroke-width="0.8" fill="none"/><path d="M2.4 2.3H5.8M4.1 2.3V6" stroke="#666" stroke-width="0.8"/></svg>
<svg class="a" style="left:153px;top:275px;" width="8" height="9" viewBox="0 0 8 9"><circle cx="1.5" cy="1.5" r="1.4" fill="#777"/><circle cx="5.6" cy="1.5" r="1.4" fill="#ea6f7c"/><circle cx="1.5" cy="5.8" r="1.4" fill="#f2a268"/><circle cx="5.6" cy="5.8" r="1.4" fill="#8cb6d6"/></svg>
<div class="a" style="left:250.5px;top:46px;width:773.5px;height:41px;background:#f4f4f4"></div>
<div class="a" style="left:250px;top:46.8px;width:774px;height:17.2px;background:#f8f8f8;border:1px solid #e3e3e3"></div>
<div class="a" style="left:250px;top:66.9px;width:774px;height:17.1px;background:#f8f8f8;border:1px solid #e3e3e3"></div>
<div class="a" style="left:334.9px;top:47.5px;width:0.8px;height:15.5px;border-left:1px dotted #dadada"></div>
<div class="a" style="left:334.9px;top:67.5px;width:0.8px;height:15.5px;border-left:1px dotted #dadada"></div>
<svg class="a" style="left:254px;top:51px;" width="7" height="7" viewBox="0 0 7 7"><path d="M0.8 2.2V6.5M3 2.2V6.5M5.2 2.2V6.5" stroke="#555" stroke-width="1"/><path d="M0.8 0.3V1.2M3 0.3V1.2M5.2 0.3V1.2" stroke="#555" stroke-width="1"/></svg>
<div class="t" style="left:264.8px;top:51.27px;font-size:8.3px;color:#555;transform:scaleX(0.989);transform-origin:0 0;">Columns</div>
<svg class="a" style="left:254px;top:71.5px;" width="7" height="7" viewBox="0 0 7 7"><path d="M0 0.8H1.2M2.2 0.8H7M0 2.8H1.2M2.2 2.8H7M0 4.8H1.2M2.2 4.8H7" stroke="#555" stroke-width="0.9"/></svg>
<div class="t" style="left:264.8px;top:71.77px;font-size:8.3px;color:#555;transform:scaleX(0.944);transform-origin:0 0;">Rows</div>
<div class="a" style="left:250px;top:86.5px;width:664.5px;height:422.5px;background:#fff;border-top:1.5px solid #d6d6d6;border-left:1px solid #d9d9d9"></div>
<div class="a" style="left:914px;top:86.5px;width:110px;height:422.5px;background:#f3f3f3;border-left:1px solid #c9c9c9"></div>
<div class="t" style="left:256.5px;top:96.03px;font-size:13.9px;color:#7d7d7d;transform:scaleX(0.968);transform-origin:0 0;">Sheet 1</div>
<svg class="a" style="left:0px;top:0px;" width="1024" height="509" viewBox="0 0 1024 509"><circle cx="373.8" cy="174.0" r="57.5" fill="#bab0ac"/><circle cx="452.7" cy="173.7" r="21.5" fill="#fabfd2"/><circle cx="519.7" cy="180.3" r="45.5" fill="#b07aa1"/><circle cx="452.3" cy="240.3" r="45.2" fill="#ffbe7d"/><circle cx="363.5" cy="259.2" r="28.2" fill="#79706e"/><circle cx="527.2" cy="266.1" r="33.8" fill="#59a14f"/><circle cx="321.6" cy="317.4" r="43.4" fill="#ff9d9a"/><circle cx="406.4" cy="313.5" r="40.7" fill="#4e79a7"/><circle cx="480.1" cy="313.5" r="32.7" fill="#a0cbe8"/><circle cx="562.4" cy="350.8" r="57.3" fill="#8cd17d"/><circle cx="367.2" cy="348.3" r="11.1" fill="#e15759"/><circle cx="448.5" cy="352.1" r="16.3" fill="#f28e2b"/><circle cx="428.0" cy="358.0" r="5.5" fill="#3f8e8a"/><circle cx="432.3" cy="376.1" r="12.9" fill="#f1ce63"/><circle cx="389.9" cy="382.8" r="30.3" fill="#86bcb6"/><circle cx="479.0" cy="398.1" r="38.8" fill="#b6992d"/><circle cx="415.6" cy="456.2" r="47.5" fill="#d37295"/></svg>
<div class="t" style="left:360.4px;top:170.56px;font-size:8.3px;color:#333;transform:scaleX(0.948);transform-origin:0 0;">Phones</div>
<div class="t" style="left:436.9px;top:170.26px;font-size:8.3px;color:#333;transform:scaleX(0.989);transform-origin:0 0;">Supplies</div>
<div class="t" style="left:508.0px;top:176.86px;font-size:8.3px;color:#f0e4ec;transform:scaleX(0.979);transform-origin:0 0;">Tables</div>
<div class="t" style="left:438.6px;top:236.86px;font-size:8.3px;color:#333;transform:scaleX(0.977);transform-origin:0 0;">Binders</div>
<div class="t" style="left:352.8px;top:255.76px;font-size:8.3px;color:#e8e4e3;transform:scaleX(0.971);transform-origin:0 0;">Paper</div>
<div class="t" style="left:507.7px;top:262.66px;font-size:8.3px;color:#e8f2e6;transform:scaleX(0.961);transform-origin:0 0;">Bookcases</div>
<div class="t" style="left:304.1px;top:313.96px;font-size:8.3px;color:#333;transform:scaleX(0.985);transform-origin:0 0;">Machines</div>
<div class="t" style="left:384.4px;top:310.06px;font-size:8.3px;color:#e8eef6;transform:scaleX(0.983);transform-origin:0 0;">Accessories</div>
<div class="t" style="left:459.6px;top:310.06px;font-size:8.3px;color:#333;transform:scaleX(1.010);transform-origin:0 0;">Appliances</div>
<div class="t" style="left:550.9px;top:347.36px;font-size:8.3px;color:#333;transform:scaleX(0.959);transform-origin:0 0;">Chairs</div>
<div class="t" style="left:442.8px;top:348.66px;font-size:8.3px;color:#3a3a2a;transform:scaleX(1.084);transform-origin:0 0;">Art</div>
<div class="t" style="left:367.9px;top:379.36px;font-size:8.3px;color:#333;transform:scaleX(1.026);transform-origin:0 0;">Furnishings</div>
<div class="t" style="left:464.8px;top:394.66px;font-size:8.3px;color:#333;transform:scaleX(0.996);transform-origin:0 0;">Copiers</div>
<div class="t" style="left:400.9px;top:452.76px;font-size:8.3px;color:#f8e8ef;transform:scaleX(1.015);transform-origin:0 0;">Storage</div>
<div class="a" style="left:953.4px;top:22.6px;width:68.6px;height:26px;background:#f8f8f8;border:1px solid #e6e6e6;border-bottom:none;box-shadow:1px 0 2px rgba(0,0,0,0.12)"></div>
<div class="a" style="left:886px;top:46.7px;width:136px;height:363.3px;background:#f9f9f9;border-left:1px solid #dedede;border-top:1px solid #e4e4e4;box-shadow:1px 1px 2px rgba(0,0,0,0.22)"></div>
<div class="a" style="left:954.4px;top:45px;width:66.6px;height:3px;background:#f9f9f9"></div>
<svg class="a" style="left:960px;top:28.5px;" width="9" height="9" viewBox="0 0 9 9"><path d="M0.5 0.8H7" stroke="#555" stroke-width="1.2"/><path d="M0.5 3H8.5" stroke="#6a9ccc" stroke-width="1.2"/><path d="M0.5 5.2H4.5" stroke="#f5a35a" stroke-width="1.2"/><path d="M0.5 7.5H5.5" stroke="#e15759" stroke-width="1.2"/></svg>
<div class="t" style="left:971.4px;top:28.14px;font-size:10px;color:#505050;transform:scaleX(0.907);transform-origin:0 0;">Show Me</div>
<div class="a" style="left:895.5px;top:56.1px;width:36.5px;height:27.3px;background:#fff;border:1px solid #eeeeee"></div>
<svg class="a" style="left:895.5px;top:56.1px;" width="36.5" height="27.3" viewBox="0 0 36.5 27.3"><rect x="5.5" y="4" width="26.8" height="19.4" fill="#fff" stroke="#aaa" stroke-width="0.6"/><rect x="5.8" y="4.3" width="26.2" height="4.6" fill="#dcdcdc"/><rect x="5.8" y="13.9" width="26.2" height="4.6" fill="#dcdcdc"/><path d="M8 6.6H10M13.5 6.6H17M20 6.6H23M8 11.3H10M13.5 11.3H17M22 11.3H25.5M8 16.2H10M13.5 16.2H17M20 16.2H23.5M14 21H16.5M22 21H24" stroke="#999" stroke-width="0.8"/></svg>
<div class="a" style="left:895.5px;top:86.9px;width:36.5px;height:27.3px;background:#fff;border:1px solid #eeeeee"></div>
<svg class="a" style="left:895.5px;top:86.9px;" width="36.5" height="27.3" viewBox="0 0 36.5 27.3"><path d="M5 8Q9 6 14 7L16 9L13 12L15 14L13 17L11 15L9 11L6 11Z M16 8L22 6L31 7L33 10L29 12L27 15L24 13L20 12L18 11Z M17 13L21 13L22 17L19 21L17 16Z M28 17L32 18L31 20L28 20Z" fill="#f1f1f1"/><circle cx="7" cy="10.5" r="0.9" fill="#f29bb5"/><circle cx="11.5" cy="9" r="0.7" fill="#f5c09a"/><circle cx="16" cy="9.5" r="0.7" fill="#f5c09a"/><circle cx="25" cy="10.5" r="1" fill="#f29bb5"/><circle cx="27" cy="13" r="0.7" fill="#f5c09a"/><circle cx="30" cy="19.5" r="0.8" fill="#f29bb5"/><circle cx="20" cy="14" r="0.6" fill="#f5c09a"/></svg>
<div class="a" style="left:895.5px;top:117.0px;width:36.5px;height:27.3px;background:#fff;border:1.5px solid #e8743b"></div>
<svg class="a" style="left:895.5px;top:117.0px;" width="36.5" height="27.3" viewBox="0 0 36.5 27.3"><path d="M6.7 7.3H19.5M6.7 11.6H30.4M6.7 15.8H13.4M6.7 20.1H25" stroke="#4e79a7" stroke-width="1.7"/></svg>
<div class="a" style="left:895.5px;top:147.4px;width:36.5px;height:27.3px;background:#fff;border:1px solid #eeeeee"></div>
<svg class="a" style="left:895.5px;top:147.4px;" width="36.5" height="27.3" viewBox="0 0 36.5 27.3"><rect x="6.7" y="5.5" width="11" height="8.5" fill="#7ea6c8"/><rect x="6.7" y="14" width="11" height="7.3" fill="#4e79a7"/><rect x="18" y="5.5" width="6" height="5.5" fill="#8fb0cf"/><rect x="24.3" y="5.5" width="5.7" height="4.8" fill="#a0cbe8"/><rect x="18" y="11.3" width="3.5" height="6.5" fill="#ff9d9a"/><rect x="18" y="18" width="3.5" height="3.3" fill="#e15759"/><rect x="21.8" y="11.3" width="3.8" height="5.3" fill="#8fb0cf"/><rect x="25.8" y="10.6" width="3.2" height="5" fill="#a0cbe8"/><rect x="21.8" y="17" width="3.5" height="4.3" fill="#a0cbe8"/><rect x="25.8" y="16" width="4.2" height="2.8" fill="#4e79a7"/><rect x="25.8" y="19" width="4.2" height="2.3" fill="#a0cbe8"/></svg>
<div class="a" style="left:895.5px;top:177.7px;width:36.5px;height:27.3px;background:#fff;border:1px solid #eeeeee"></div>
<svg class="a" style="left:895.5px;top:177.7px;" width="36.5" height="27.3" viewBox="0 0 36.5 27.3"><path d="M6.5 8L9.5 5L14.5 12L18.5 8.5L23 13L29.5 10" stroke="#f7c7a6" stroke-width="0.7" fill="none"/><path d="M6.5 11.5L9.5 13L12.5 10L16 12L20.5 14.5L23 15.5L29.5 14" stroke="#f7d4bc" stroke-width="0.7" fill="none"/><path d="M6.5 15.5L10 18.5L16.5 15L22.5 19L29.5 17" stroke="#abc9dc" stroke-width="0.7" fill="none"/></svg>
<div class="a" style="left:895.5px;top:208.3px;width:36.5px;height:27.3px;background:#fff;border:1px solid #eeeeee"></div>
<svg class="a" style="left:895.5px;top:208.3px;" width="36.5" height="27.3" viewBox="0 0 36.5 27.3"><path d="M5.5 10.5L11.5 4.5L22 11L30.5 8V23H5.5Z" fill="#bcd3e3"/><path d="M5.5 14L11.5 9.5L22 15L30.5 12V23H5.5Z" fill="#f8d0b0"/><path d="M5.5 17.5L11.5 15L22 18.5L30.5 16V23H5.5Z" fill="#fce8da"/></svg>
<div class="a" style="left:895.5px;top:238.4px;width:36.5px;height:27.3px;background:#fff;border:1px solid #eeeeee"></div>
<svg class="a" style="left:895.5px;top:238.4px;" width="36.5" height="27.3" viewBox="0 0 36.5 27.3"><circle cx="5.5" cy="16.5" r="1.7" stroke="#f7bf98" stroke-width="0.6" fill="none"/><circle cx="8.5" cy="11.5" r="1.7" stroke="#f7bf98" stroke-width="0.6" fill="none"/><circle cx="15" cy="5" r="1.7" stroke="#f7bf98" stroke-width="0.6" fill="none"/><circle cx="16.5" cy="13" r="1.7" stroke="#f7bf98" stroke-width="0.6" fill="none"/><circle cx="25.5" cy="6.5" r="1.7" stroke="#f7bf98" stroke-width="0.6" fill="none"/><path d="M18.6 4.5H22.0M20.3 2.8V6.2" stroke="#b8d0e0" stroke-width="0.55"/><path d="M16.8 9H20.2M18.5 7.3V10.7" stroke="#b8d0e0" stroke-width="0.55"/><path d="M11.100000000000001 14.5H14.5M12.8 12.8V16.2" stroke="#b8d0e0" stroke-width="0.55"/><path d="M21.1 14H24.5M22.8 12.3V15.7" stroke="#b8d0e0" stroke-width="0.55"/><path d="M26.1 11.5H29.5M27.8 9.8V13.2" stroke="#b8d0e0" stroke-width="0.55"/></svg>
<div class="a" style="left:895.5px;top:268.6px;width:36.5px;height:27.3px;background:#fff;border:1px solid #eeeeee"></div>
<svg class="a" style="left:895.5px;top:268.6px;" width="36.5" height="27.3" viewBox="0 0 36.5 27.3"><g transform="translate(-3.5,0) scale(1.64,1)"><rect x="5.5" y="5" width="2.6" height="2.5" fill="#b7dfc6"/><rect x="9.5" y="5" width="1.8" height="2.5" fill="#f8cfae"/><rect x="12" y="5" width="0.8" height="2.5" fill="#f8cfae"/><rect x="14" y="5" width="0.6" height="2.5" fill="#f8cfae"/><rect x="16.5" y="5" width="2.5" height="2.5" fill="#f8cfae"/><rect x="5.5" y="11.3" width="2.2" height="2.5" fill="#cfe2ec"/><rect x="9.5" y="11.3" width="1.3" height="2.5" fill="#b7dfc6"/><rect x="12" y="11.3" width="4" height="2.5" fill="#d5e6ef"/><rect x="18" y="11.3" width="3" height="2.5" fill="#f8cfae"/><rect x="5.5" y="17.5" width="0.6" height="2.5" fill="#b7dfc6"/><rect x="7.5" y="17.5" width="2.2" height="2.5" fill="#f8d6bd"/><rect x="10.5" y="17.5" width="2" height="2.5" fill="#d5e6ef"/><rect x="14.5" y="17.5" width="2.5" height="2.5" fill="#b7dfc6"/><rect x="18.5" y="17.5" width="1.3" height="2.5" fill="#f8d6bd"/></g></svg>
<div class="a" style="left:935.5px;top:56.1px;width:36.5px;height:27.3px;background:#fff;border:1px solid #eeeeee"></div>
<svg class="a" style="left:935.5px;top:56.1px;" width="36.5" height="27.3" viewBox="0 0 36.5 27.3"><path d="M6 6.7H8.5M6 13.2H8.5M6 19.8H8" stroke="#aaa" stroke-width="0.6"/><rect x="11" y="4.9" width="3.6" height="3.6" fill="#9fd9b4"/><rect x="16.2" y="4.6" width="3.4" height="3.4" fill="#f28e2b"/><rect x="22.2" y="4.8" width="3.8" height="3.8" fill="#4f9e78"/><rect x="27.7" y="4.9" width="1.9" height="1.9" fill="#9fd9b4"/><rect x="11" y="11.6" width="3.6" height="3.6" fill="#9fd9b4"/><rect x="16.5" y="11.7" width="1.7" height="1.7" fill="#f5a35a"/><rect x="22.3" y="11.7" width="3" height="3" fill="#9fd9b4"/><rect x="27.7" y="11.8" width="3.6" height="3.6" fill="#9fd9b4"/><rect x="10.8" y="18" width="4.6" height="4.6" fill="#4f9e78"/><rect x="15.6" y="18" width="4.6" height="4.6" fill="#9fd9b4"/><rect x="22" y="18" width="4.6" height="4.6" fill="#4f9e78"/><rect x="27" y="18" width="3.8" height="3.8" fill="#9fd9b4"/></svg>
<div class="a" style="left:935.5px;top:86.9px;width:36.5px;height:27.3px;background:#fff;border:1px solid #eeeeee"></div>
<svg class="a" style="left:935.5px;top:86.9px;" width="36.5" height="27.3" viewBox="0 0 36.5 27.3"><path d="M5 8Q9 6 14 7L16 9L13 12L15 14L13 17L11 15L9 11L6 11Z M16 8L22 6L31 7L33 10L29 12L27 15L24 13L20 12L18 11Z M17 13L21 13L22 17L19 21L17 16Z M28 17L32 18L31 20L28 20Z" fill="#fbe3d6"/><circle cx="8" cy="9.5" r="0.8" fill="#f29bb5"/><circle cx="19" cy="16" r="0.8" fill="#f29bb5"/><circle cx="24" cy="11" r="0.7" fill="#f29bb5"/><circle cx="28" cy="11" r="0.7" fill="#f29bb5"/><circle cx="31" cy="19.5" r="0.8" fill="#f29bb5"/></svg>
<div class="a" style="left:935.5px;top:117.0px;width:36.5px;height:27.3px;background:#fff;border:1px solid #eeeeee"></div>
<svg class="a" style="left:935.5px;top:117.0px;" width="36.5" height="27.3" viewBox="0 0 36.5 27.3"><rect x="7.300000000000001" y="6.1" width="4.2" height="15.200000000000001" fill="#a0cbe8"/><rect x="7.300000000000001" y="6.1" width="4.2" height="3.5999999999999996" fill="#4e79a7"/><rect x="13.4" y="9.1" width="4.2" height="12.200000000000001" fill="#a0cbe8"/><rect x="13.4" y="9.1" width="4.2" height="4.300000000000001" fill="#4e79a7"/><rect x="19.599999999999998" y="7.9" width="4.2" height="13.4" fill="#a0cbe8"/><rect x="19.599999999999998" y="7.9" width="4.2" height="9.799999999999999" fill="#4e79a7"/><rect x="25.9" y="11.6" width="4.2" height="9.700000000000001" fill="#a0cbe8"/><rect x="25.9" y="11.6" width="4.2" height="4.200000000000001" fill="#4e79a7"/></svg>
<div class="a" style="left:935.5px;top:147.4px;width:36.5px;height:27.3px;background:#fff;border:1px solid #eeeeee"></div>
<svg class="a" style="left:935.5px;top:147.4px;" width="36.5" height="27.3" viewBox="0 0 36.5 27.3"><circle cx="9.4" cy="8.0" r="2.6" stroke="#4e79a7" stroke-width="0.55" fill="none"/><circle cx="9.4" cy="10.4" r="2.6" stroke="#4e79a7" stroke-width="0.55" fill="none"/><circle cx="9.4" cy="18.3" r="2.6" stroke="#4e79a7" stroke-width="0.55" fill="none"/><circle cx="18.6" cy="8.5" r="2.6" stroke="#4e79a7" stroke-width="0.55" fill="none"/><circle cx="18.6" cy="15.3" r="2.6" stroke="#4e79a7" stroke-width="0.55" fill="none"/><circle cx="18.6" cy="17.6" r="2.6" stroke="#4e79a7" stroke-width="0.55" fill="none"/><circle cx="28.2" cy="8.5" r="2.6" stroke="#4e79a7" stroke-width="0.55" fill="none"/><circle cx="28.2" cy="12.6" r="2.6" stroke="#4e79a7" stroke-width="0.55" fill="none"/><circle cx="28.2" cy="20.7" r="2.6" stroke="#4e79a7" stroke-width="0.55" fill="none"/><path d="M16.2 24.2A2.6 2.6 0 0 1 21 24.2" stroke="#4e79a7" stroke-width="0.55" fill="none"/></svg>
<div class="a" style="left:935.5px;top:177.7px;width:36.5px;height:27.3px;background:#fff;border:1px solid #eeeeee"></div>
<svg class="a" style="left:935.5px;top:177.7px;" width="36.5" height="27.3" viewBox="0 0 36.5 27.3"><path d="M18.6 3V23" stroke="#eee" stroke-width="0.5"/><path d="M6 10.5L10 12L13 9L16.5 10M20.5 10.5L24 7.5L27.5 10L31 9.5" stroke="#f7c7a6" stroke-width="0.7" fill="none"/><path d="M6 14.5L10 13L13 11.5L16.5 11M20.5 14.5L25 13L28 13.5L31 12" stroke="#f7d4bc" stroke-width="0.7" fill="none"/><path d="M6 18L9 19L12 16.5L16.5 16.3M20.5 18.5L23 16.5L27 18L31 16.5" stroke="#abc9dc" stroke-width="0.7" fill="none"/></svg>
<div class="a" style="left:935.5px;top:208.3px;width:36.5px;height:27.3px;background:#fff;border:1px solid #eeeeee"></div>
<svg class="a" style="left:935.5px;top:208.3px;" width="36.5" height="27.3" viewBox="0 0 36.5 27.3"><path d="M5.5 11L8 5.5L12 11L17 8V23H5.5Z M19.5 8.5L22.5 5L27 11L31 9V23H19.5Z" fill="#bcd3e3"/><path d="M5.5 14.5L8 10.5L12 15L17 12V23H5.5Z M19.5 12L22.5 9.5L27 15L31 13V23H19.5Z" fill="#f8d0b0"/><path d="M5.5 18L8 16L12 18.5L17 17V23H5.5Z M19.5 17L22.5 16L27 18.5L31 17V23H19.5Z" fill="#fce8da"/></svg>
<div class="a" style="left:935.5px;top:238.4px;width:36.5px;height:27.3px;background:#fff;border:1px solid #eeeeee"></div>
<svg class="a" style="left:935.5px;top:238.4px;" width="36.5" height="27.3" viewBox="0 0 36.5 27.3"><rect x="7.0" y="21" width="2" height="1" fill="#b7dfc6"/><rect x="9.6" y="18.5" width="2" height="3.5" fill="#b7dfc6"/><rect x="12.2" y="15" width="2" height="7" fill="#b7dfc6"/><rect x="14.8" y="9.5" width="2" height="12.5" fill="#b7dfc6"/><rect x="17.4" y="6" width="2" height="16" fill="#b7dfc6"/><rect x="20.0" y="9.5" width="2" height="12.5" fill="#b7dfc6"/><rect x="22.6" y="14" width="2" height="8" fill="#b7dfc6"/><rect x="25.2" y="18.5" width="2" height="3.5" fill="#b7dfc6"/><rect x="27.8" y="21" width="2" height="1" fill="#b7dfc6"/></svg>
<div class="a" style="left:935.5px;top:268.6px;width:36.5px;height:27.3px;background:#fff;border:1px solid #eeeeee"></div>
<svg class="a" style="left:935.5px;top:268.6px;" width="36.5" height="27.3" viewBox="0 0 36.5 27.3"><rect x="6.5" y="5.5" width="23" height="2.5" fill="#f6f6f6"/><rect x="6.5" y="5.8" width="13" height="1.8" fill="#b7dfc6"/><path d="M20.5 5V8.5" stroke="#bbb" stroke-width="0.8"/><rect x="6.5" y="12" width="23" height="2.5" fill="#f6f6f6"/><rect x="6.5" y="12.3" width="19.5" height="1.8" fill="#b7dfc6"/><path d="M24.5 11.5V15" stroke="#888" stroke-width="0.8"/><rect x="6.5" y="18.5" width="23" height="2.5" fill="#f6f6f6"/><rect x="6.5" y="18.8" width="11" height="1.8" fill="#b7dfc6"/><path d="M28 18V21.5" stroke="#bbb" stroke-width="0.8"/></svg>
<div class="a" style="left:975.5px;top:56.1px;width:36.5px;height:27.3px;background:#fff;border:1px solid #eeeeee"></div>
<svg class="a" style="left:975.5px;top:56.1px;" width="36.5" height="27.3" viewBox="0 0 36.5 27.3"><rect x="4.9" y="4.3" width="26.8" height="19.1" fill="#fff" stroke="#aaa" stroke-width="0.6"/><rect x="11" y="4.6" width="10.5" height="5.6" fill="#4f9e78"/><rect x="21.5" y="4.6" width="10" height="5.6" fill="#9fd9b4"/><rect x="11" y="10.2" width="10.5" height="5" fill="#f5b07a"/><rect x="21.5" y="10.2" width="10" height="5" fill="#4f9e78"/><rect x="11" y="15.2" width="10.5" height="4.8" fill="#9fd9b4"/><rect x="21.5" y="15.2" width="10" height="4.8" fill="#9fd9b4"/><rect x="11" y="20" width="10.5" height="3.2" fill="#4f9e78"/><rect x="21.5" y="20" width="10" height="3.2" fill="#9fd9b4"/><path d="M6.5 6.8H9M6.5 12.5H9M6.5 17.5H9" stroke="#999" stroke-width="0.6"/><path d="M11 15.2H31.5M11 20H31.5" stroke="#3a7a5c" stroke-width="0.4" stroke-dasharray="0.6 0.6"/></svg>
<div class="a" style="left:975.5px;top:86.9px;width:36.5px;height:27.3px;background:#fff;border:1px solid #eeeeee"></div>
<svg class="a" style="left:975.5px;top:86.9px;" width="36.5" height="27.3" viewBox="0 0 36.5 27.3"><path d="M18.6 13.8L10.70 13.80A7.9 7.9 0 0 1 18.60 5.90Z" fill="#e15759"/><path d="M18.6 13.8L18.60 5.90A7.9 7.9 0 0 1 24.19 8.21Z" fill="#ff9d9a"/><path d="M18.6 13.8L24.19 8.21A7.9 7.9 0 0 1 23.13 20.27Z" fill="#4e79a7"/><path d="M18.6 13.8L23.13 20.27A7.9 7.9 0 0 1 10.70 13.80Z" fill="#a0cbe8"/></svg>
<div class="a" style="left:975.5px;top:117.0px;width:36.5px;height:27.3px;background:#fff;border:1px solid #eeeeee"></div>
<svg class="a" style="left:975.5px;top:117.0px;" width="36.5" height="27.3" viewBox="0 0 36.5 27.3"><path d="M14 3V23M24.1 3V23" stroke="#eee" stroke-width="0.5"/><rect x="6.5" y="17" width="1.8" height="5" fill="#b9d4e8"/><rect x="9.3" y="12" width="1.2" height="10" fill="#d5e6f1"/><rect x="16.5" y="8.5" width="1.8" height="13.5" fill="#b9d4e8"/><rect x="19.3" y="14" width="1.2" height="8" fill="#d5e6f1"/><rect x="26" y="19" width="1.8" height="3" fill="#b9d4e8"/><rect x="29" y="11.5" width="1.2" height="10.5" fill="#d5e6f1"/></svg>
<div class="a" style="left:975.5px;top:147.4px;width:36.5px;height:27.3px;background:#fff;border:1px solid #eeeeee"></div>
<svg class="a" style="left:975.5px;top:147.4px;" width="36.5" height="27.3" viewBox="0 0 36.5 27.3"><path d="M18.7 3V23" stroke="#e6eef5" stroke-width="0.5"/><circle cx="7.5" cy="7.8" r="1.9" stroke="#b9d4e8" stroke-width="0.5" fill="none"/><circle cx="11" cy="9.5" r="1.9" stroke="#b9d4e8" stroke-width="0.5" fill="none"/><circle cx="11.5" cy="16" r="1.9" stroke="#b9d4e8" stroke-width="0.5" fill="none"/><circle cx="7.5" cy="19.5" r="1.9" stroke="#b9d4e8" stroke-width="0.5" fill="none"/><circle cx="11" cy="20.2" r="1.9" stroke="#b9d4e8" stroke-width="0.5" fill="none"/><circle cx="23.5" cy="8" r="1.9" stroke="#b9d4e8" stroke-width="0.5" fill="none"/><circle cx="27" cy="9.5" r="1.9" stroke="#b9d4e8" stroke-width="0.5" fill="none"/><circle cx="27" cy="12" r="1.9" stroke="#b9d4e8" stroke-width="0.5" fill="none"/><circle cx="23" cy="17.5" r="1.9" stroke="#b9d4e8" stroke-width="0.5" fill="none"/><circle cx="27" cy="19" r="1.9" stroke="#b9d4e8" stroke-width="0.5" fill="none"/></svg>
<div class="a" style="left:975.5px;top:177.7px;width:36.5px;height:27.3px;background:#fff;border:1px solid #eeeeee"></div>
<svg class="a" style="left:975.5px;top:177.7px;" width="36.5" height="27.3" viewBox="0 0 36.5 27.3"><path d="M5.5 4V22M31.5 4V22" stroke="#e8e8e8" stroke-width="0.5" stroke-dasharray="0.8 1.5"/><path d="M8.7 9.5L12.8 6L17.5 10L21.5 8L26 11L29.3 8" stroke="#f7c7a6" stroke-width="0.7" fill="none"/><path d="M8.7 14L12.8 12.5L17.5 17L21 15L25.5 18L29.3 14" stroke="#abc9dc" stroke-width="0.7" fill="none"/></svg>
<div class="a" style="left:975.5px;top:208.3px;width:36.5px;height:27.3px;background:#fff;border:1px solid #eeeeee"></div>
<svg class="a" style="left:975.5px;top:208.3px;" width="36.5" height="27.3" viewBox="0 0 36.5 27.3"><rect x="8.5" y="11.5" width="2.6" height="10" fill="#bcd3e3"/><rect x="13" y="8" width="2.6" height="13.5" fill="#bcd3e3"/><rect x="17.3" y="13" width="2.6" height="8.5" fill="#bcd3e3"/><rect x="21.5" y="5.5" width="2.6" height="16" fill="#a9c6dc"/><rect x="26" y="11" width="2.6" height="10.5" fill="#bcd3e3"/><path d="M9.8 10L14.3 6.5L18.5 11L22.8 7.5L27.3 10.5" stroke="#f7c7a6" stroke-width="0.7" fill="none"/></svg>
<div class="a" style="left:975.5px;top:238.4px;width:36.5px;height:27.3px;background:#fff;border:1px solid #eeeeee"></div>
<svg class="a" style="left:975.5px;top:238.4px;" width="36.5" height="27.3" viewBox="0 0 36.5 27.3"><path d="M9.3 4.5V21M8.100000000000001 4.5H10.5M8.100000000000001 21H10.5" stroke="#444" stroke-width="0.6"/><rect x="7.300000000000001" y="10.5" width="4" height="7.0" fill="#8fd0a6"/><rect x="7.300000000000001" y="14.0" width="4" height="3.5" fill="#3f8f6b"/><path d="M15.6 4V21.5M14.4 4H16.8M14.4 21.5H16.8" stroke="#444" stroke-width="0.6"/><rect x="13.6" y="8.5" width="4" height="6.5" fill="#8fd0a6"/><rect x="13.6" y="11.75" width="4" height="3.25" fill="#3f8f6b"/><path d="M21.9 4V21.5M20.7 4H23.099999999999998M20.7 21.5H23.099999999999998" stroke="#444" stroke-width="0.6"/><rect x="19.9" y="10" width="4" height="7.5" fill="#8fd0a6"/><rect x="19.9" y="13.75" width="4" height="3.75" fill="#3f8f6b"/><path d="M28.3 3.5V22.5M27.1 3.5H29.5M27.1 22.5H29.5" stroke="#444" stroke-width="0.6"/><rect x="26.3" y="7.5" width="4" height="9.0" fill="#8fd0a6"/><rect x="26.3" y="12.0" width="4" height="4.5" fill="#3f8f6b"/></svg>
<div class="a" style="left:975.5px;top:268.6px;width:36.5px;height:27.3px;background:#fff;border:1px solid #eeeeee"></div>
<svg class="a" style="left:975.5px;top:268.6px;" width="36.5" height="27.3" viewBox="0 0 36.5 27.3"><circle cx="11.8" cy="16.8" r="5.1" fill="#9ed7b4"/><circle cx="19.8" cy="13.2" r="2.8" fill="#fdba80"/><circle cx="26.9" cy="10.8" r="3.6" fill="#fdba80"/><circle cx="17.8" cy="7.8" r="2.3" fill="#4f9e78"/><circle cx="12" cy="9.1" r="1.8" fill="#4f9e78"/><circle cx="22.3" cy="8.5" r="1.4" fill="#9ed7b4"/><circle cx="18.5" cy="19.2" r="2.2" fill="#4f9e78"/><circle cx="23.3" cy="16.3" r="1.8" fill="#f28e2b"/></svg>
<div class="t" style="left:896.6px;top:309.52px;font-size:8.6px;color:#444;transform:scaleX(0.955);transform-origin:0 0;">For </div>
<div class="t" style="left:911.2px;top:309.52px;font-size:8.6px;color:#333;font-weight:bold;transform:scaleX(0.884);transform-origin:0 0;">horizontal bars</div>
<div class="t" style="left:967.6px;top:309.52px;font-size:8.6px;color:#444;transform:scaleX(1.340);transform-origin:0 0;">try</div>
<div class="t" style="left:896.6px;top:326.02px;font-size:8.6px;color:#444;transform:scaleX(0.962);transform-origin:0 0;">0 or more</div>
<div class="a" style="left:934.4px;top:323.8px;width:60.1px;height:13px;background:#4e90b2;border-radius:7px"></div>
<div class="t" style="left:941.4px;top:326.32px;font-size:8.6px;color:#fff;transform:scaleX(0.970);transform-origin:0 0;">Dimensions</div>
<div class="t" style="left:896.6px;top:344.12px;font-size:8.6px;color:#444;transform:scaleX(0.918);transform-origin:0 0;">1 or more</div>
<div class="a" style="left:932.7px;top:342px;width:52.4px;height:13px;background:#1fad7b;border-radius:7px"></div>
<div class="t" style="left:939.8px;top:344.52px;font-size:8.6px;color:#fff;transform:scaleX(0.969);transform-origin:0 0;">Measures</div>
</body></html>
